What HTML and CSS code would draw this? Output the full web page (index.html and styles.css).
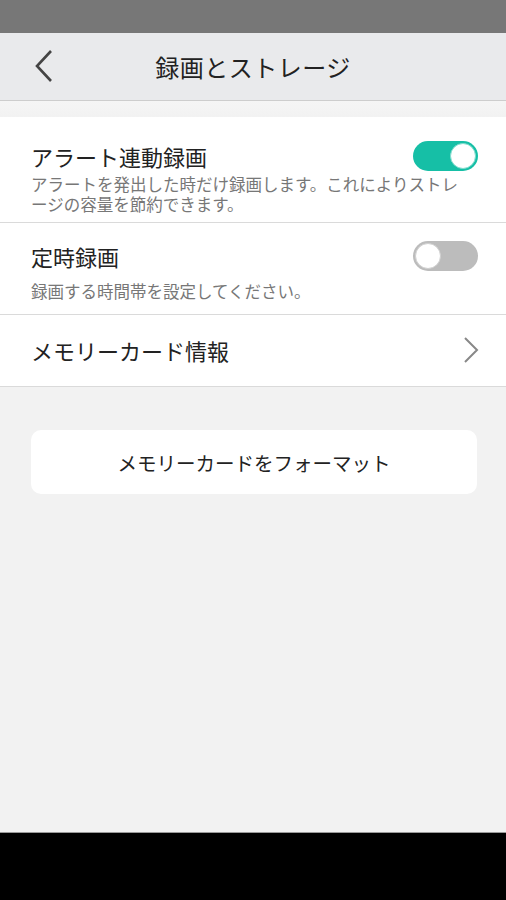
FILE: index.html
```html
<!DOCTYPE html>
<html lang="ja">

<head>
    <meta charset="UTF-8">
    <meta name="viewport" content="width=device-width, initial-scale=1.0">
    <title>録画とストレージ</title>
    <link rel="stylesheet" href="styles.css">
</head>

<body>
    <div class="statusbar"></div>

    <div class="header">
        <button class="back" aria-label="戻る">
            <svg width="20" height="34" viewBox="0 0 20 34">
                <polyline points="17,2 3,17 17,32" fill="none" stroke="#444" stroke-width="2.6" />
            </svg>
        </button>
        <h1>録画とストレージ</h1>
    </div>

    <div class="screen">
        <div class="list">
            <div class="row row-alert">
                <div class="row-head">
                    <span class="row-title">アラート連動録画</span>
                    <span class="toggle on"><span class="knob"></span></span>
                </div>
                <p class="row-desc">アラートを発出した時だけ録画します。これによりストレージの容量を節約できます。</p>
            </div>

            <div class="row row-timer">
                <div class="row-head">
                    <span class="row-title">定時録画</span>
                    <span class="toggle"><span class="knob"></span></span>
                </div>
                <p class="row-desc">録画する時間帯を設定してください。</p>
            </div>

            <div class="row row-link">
                <div class="row-head">
                    <span class="row-title">メモリーカード情報</span>
                    <svg class="chevron" width="16" height="28" viewBox="0 0 16 28">
                        <polyline points="2,2 14,14 2,26" fill="none" stroke="#888" stroke-width="2" />
                    </svg>
                </div>
            </div>
        </div>

        <button class="format">メモリーカードをフォーマット</button>
    </div>

    <div class="navbar"></div>
</body>

</html>
```

FILE: styles.css
```css
body {
    font-family: "Noto Sans CJK JP", "Noto Sans", sans-serif;
    margin: 0;
    padding: 0;
    height: 900px;
    display: flex;
    flex-direction: column;
    background-color: #f2f2f2;
}

.statusbar {
    height: 33px;
    background-color: #777;
}

.header {
    height: 67px;
    background-color: #e9eaec;
    border-bottom: 1px solid #cdcdcd;
    display: flex;
    align-items: center;
    justify-content: center;
    position: relative;
}

.header h1 {
    margin: 0;
    font-size: 24px;
    font-weight: normal;
    color: #222;
    letter-spacing: 0.5px;
}

.back {
    position: absolute;
    left: 34px;
    top: 16px;
    padding: 0;
    border: none;
    background: none;
    display: flex;
}

.screen {
    flex: 1;
    padding-top: 16px;
    background: linear-gradient(#f5f5f5, #f2f2f2 16px);
    background-color: #f2f2f2;
}

.list {
    background-color: #fff;
}

.row {
    padding: 0 28px 0 31px;
    border-bottom: 1px solid #dadada;
}

.row-alert {
    padding-top: 24px;
    padding-bottom: 8px;
}

.row-timer {
    padding-top: 18px;
    padding-bottom: 13px;
}

.row-timer .row-desc {
    margin-top: 10px;
}

.row-link {
    padding-top: 20px;
    padding-bottom: 21px;
}

.row-head {
    height: 30px;
    display: flex;
    align-items: center;
    justify-content: space-between;
}

.row-title {
    font-size: 22px;
    line-height: 30px;
    color: #222;
}

.row-desc {
    margin: 3px 12px 0 0;
    font-size: 16.5px;
    line-height: 20px;
    color: #777;
}

.toggle {
    width: 65px;
    height: 30px;
    box-sizing: border-box;
    border-radius: 15px;
    background-color: #bcbcbc;
    padding: 2px;
    display: flex;
}

.toggle .knob {
    width: 26px;
    height: 26px;
    box-sizing: border-box;
    border-radius: 50%;
    background-color: #fff;
    border: 1px solid #cfcfcf;
}

.toggle.on {
    background-color: #16bfa6;
    justify-content: flex-end;
}

.toggle.on .knob {
    border-color: #7fdccd;
}

.chevron {
    margin-right: -1px;
}

.format {
    display: block;
    width: 446px;
    height: 64px;
    margin: 43px 0 0 31px;
    border: none;
    border-radius: 10px;
    background-color: #fff;
    font-family: inherit;
    font-size: 19.5px;
    color: #222;
}

.navbar {
    height: 67px;
    background-color: #000;
    border-top: 1px solid #9a9a9a;
}
```
